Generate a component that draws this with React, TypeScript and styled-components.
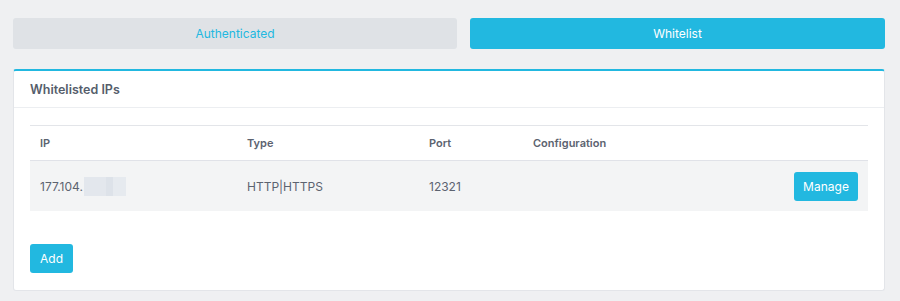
import React from "react";
import styled, { createGlobalStyle } from "styled-components";

const Global = createGlobalStyle`
  html, body { margin: 0; padding: 0; background: #eff0f2; }
  body { font-family: Inter, "Noto Sans", Arial, sans-serif; -webkit-font-smoothing: antialiased; }
`;

const Page = styled.div`
  padding: 18px 15px 12px 13px;
`;

const Tabs = styled.div`
  display: flex;
  gap: 13px;
`;

const Tab = styled.button<{ $active?: boolean; $w?: string }>`
  flex: ${(p) => (p.$w ? `0 0 ${p.$w}` : "1")};
  height: 31px;
  border: none;
  border-radius: 3px;
  font-family: inherit;
  font-size: 12px;
  background: ${(p) => (p.$active ? "#22b8e0" : "#dfe2e6")};
  color: ${(p) => (p.$active ? "#ffffff" : "#22b8e0")};
  cursor: pointer;
`;

const Card = styled.div`
  margin-top: 20px;
  background: #fff;
  border: 1px solid #e3e5e9;
  border-top: 2px solid #22b8e0;
  border-radius: 3px;
`;

const CardHeader = styled.div`
  height: 36px;
  display: flex;
  align-items: center;
  padding: 0 16px;
  border-bottom: 1px solid #eceef1;
  font-size: 12.5px;
  font-weight: 600;
  color: #555d6b;
`;

const CardBody = styled.div`
  padding: 17px 16px 17px 16px;
`;

const Table = styled.div`
  border-top: 1px solid #e3e5e9;
`;

const Row = styled.div<{ $head?: boolean }>`
  display: grid;
  grid-template-columns: 207px 182px 104px 1fr;
  align-items: center;
  height: ${(p) => (p.$head ? "34px" : "50px")};
  background: ${(p) => (p.$head ? "#fff" : "#f3f4f5")};
  border-top: ${(p) => (p.$head ? "none" : "1px solid #e0e2e8")};
  font-size: ${(p) => (p.$head ? "11px" : "12px")};
  font-weight: ${(p) => (p.$head ? 600 : 400)};
  color: #5c6370;
`;

const Cell = styled.div<{ $right?: boolean }>`
  padding: 0 10px;
  display: flex;
  align-items: center;
  justify-content: ${(p) => (p.$right ? "flex-end" : "flex-start")};
`;

const Masked = styled.span`
  display: inline-block;
  width: 42px;
  height: 19px;
  margin-left: 1px;
  background: linear-gradient(90deg, #e3e7ed 0 52%, #dde2e9 52% 68%, #e6eaef 68% 100%);
`;

const Button = styled.button<{ $w: string }>`
  width: ${(p) => p.$w};
  height: 29px;
  border: none;
  border-radius: 3px;
  background: #22b8e0;
  color: #fff;
  font-family: inherit;
  font-size: 12px;
  cursor: pointer;
`;

const Actions = styled.div`
  margin-top: 33px;
`;

export default function App() {
  return (
    <>
      <Global />
      <Page>
        <Tabs>
          <Tab $w="444px">Authenticated</Tab>
          <Tab $active>Whitelist</Tab>
        </Tabs>
        <Card>
          <CardHeader>Whitelisted IPs</CardHeader>
          <CardBody>
            <Table>
              <Row $head>
                <Cell>IP</Cell>
                <Cell>Type</Cell>
                <Cell>Port</Cell>
                <Cell>Configuration</Cell>
              </Row>
              <Row>
                <Cell>
                  177.104.<Masked />
                </Cell>
                <Cell>HTTP|HTTPS</Cell>
                <Cell>12321</Cell>
                <Cell $right>
                  <Button $w="64px">Manage</Button>
                </Cell>
              </Row>
            </Table>
            <Actions>
              <Button $w="43px">Add</Button>
            </Actions>
          </CardBody>
        </Card>
      </Page>
    </>
  );
}
